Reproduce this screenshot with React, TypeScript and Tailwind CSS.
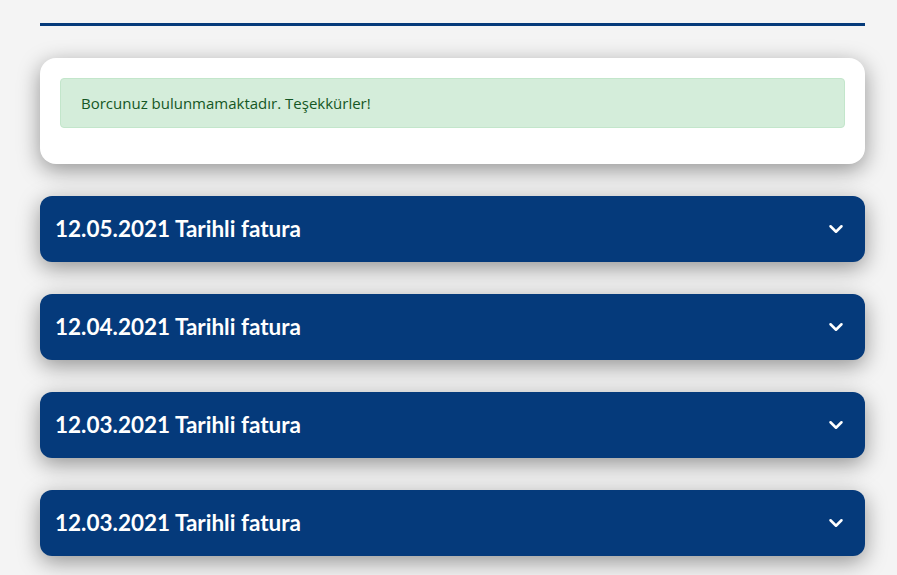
import { ChevronDown } from 'lucide-react'

const invoices = ['12.05.2021', '12.04.2021', '12.03.2021', '12.03.2021']

export default function App() {
  return (
    <div className="min-h-screen bg-[#f4f4f4] pl-10 pr-8 pt-[23px] pb-10 font-['Open_Sans',sans-serif]">
      <div className="h-[3px] bg-[#053a7a]" />
      <div className="mt-8 flex flex-col gap-8">
        <div className="bg-white rounded-2xl px-5 pt-5 pb-9 shadow-[0_6px_22px_rgba(0,0,0,0.4)]">
          <div className="h-[50px] flex items-center px-5 rounded bg-[#d4edda] border border-[#c3e6cb] text-[#155724] text-[15px]">
            Borcunuz bulunmamaktadır. Teşekkürler!
          </div>
        </div>
        {invoices.map((date, i) => (
          <div
            key={i}
            className="h-[66px] flex items-center justify-between pl-4 pr-[18px] rounded-xl bg-[#053a7b] text-white shadow-[0_6px_22px_rgba(0,0,0,0.4)]"
          >
            <span className="font-['Lato',sans-serif] text-[22.5px] font-bold -ml-px">{date} Tarihli fatura</span>
            <ChevronDown className="w-[22px] h-[22px]" strokeWidth={2.75} />
          </div>
        ))}
      </div>
    </div>
  )
}
